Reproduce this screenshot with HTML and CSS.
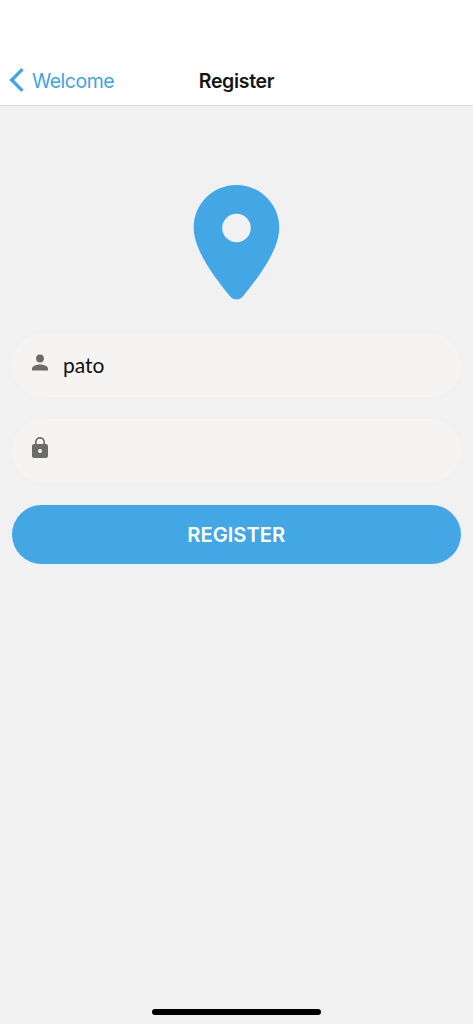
FILE: index.html
```html
<!DOCTYPE html>
<html lang="en">
<head>
<meta charset="utf-8">
<title>Register</title>
<link rel="stylesheet" href="styles.css">
</head>
<body>
<div class="screen">
  <header class="navbar">
    <a class="back">
      <svg class="chevron" width="16" height="26" viewBox="0 0 16 26"><path d="M14.500 2.200 3.700 13l10.800 10.800" fill="none" stroke="#40a5e0" stroke-width="3.300"/></svg>
      <span class="back-label">Welcome</span>
    </a>
    <h1 class="title">Register</h1>
  </header>
  <main class="content">
    <svg class="pin" width="87" height="115" viewBox="-.5 0 87 115"><path fill="#43a6e5" fill-rule="evenodd" d="M43 0C19.300 0 .2 19 .2 42.500.2 65 20.500 91.500 36.700 111.500 40 115.500 46 115.500 49.300 111.500 65.500 91.500 85.800 65 85.800 42.500 85.800 19 66.700 0 43 0ZM43 28.700a14.300 14.300 0 1 1 0 28.600 14.300 14.300 0 0 1 0-28.600Z"/></svg>
    <form class="form">
      <div class="field">
        <svg class="icon" width="24" height="24" viewBox="0 -.5 24 24"><circle cx="12" cy="8" r="3.900"/><path d="M4 20v-1.900c0-2.700 5.300-4.100 8-4.100s8 1.400 8 4.100V20Z"/></svg>
        <span class="value">pato</span>
      </div>
      <div class="field">
        <svg class="icon" width="24" height="24" viewBox="0 -1 24 24"><path fill-rule="evenodd" d="M18 8h-1V6A5 5 0 0 0 7 6v2H6a2 2 0 0 0-2 2v10c0 1.100.9 2 2 2h12a2 2 0 0 0 2-2V10a2 2 0 0 0-2-2ZM12 17a2 2 0 1 1 0-4 2 2 0 0 1 0 4ZM15.300 8H8.700V6a3.300 3.300 0 0 1 6.600 0Z"/></svg>
      </div>
      <button class="submit" type="button">REGISTER</button>
    </form>
  </main>
  <footer class="home"><div class="home-bar"></div></footer>
</div>
</body>
</html>
```
FILE: styles.css
```css
* { box-sizing: border-box; }
body { margin: 0; font-family: Inter, "Liberation Sans", sans-serif; }
.screen {
  display: flex;
  flex-direction: column;
  height: 1024px;
  background: #f1f1f1;
}
.navbar {
  display: grid;
  grid-template-columns: 1fr auto 1fr;
  align-items: center;
  height: 106px;
  padding: 55px 8px 0;
  background: #fff;
  border-bottom: 1px solid #dedede;
}
.back { display: flex; align-items: center; gap: 8px; color: #40a5e0; }
.back-label { padding-top: 1px; font-size: 19.5px; line-height: 24px; letter-spacing: -0.5px; }
.title { margin: 0; padding-top: 1px; font-size: 19.5px; line-height: 24px; font-weight: 600; color: #151515; letter-spacing: -0.3px; }
.content { flex: 1; display: flex; flex-direction: column; align-items: center; padding: 79px 12px 0 11px; }
.pin { display: block; }
.form { width: 100%; margin-top: 34px; padding-left: 0.5px; display: flex; flex-direction: column; }
.field {
  display: flex;
  align-items: flex-start;
  gap: 11px;
  height: 62.5px;
  margin-bottom: 22.5px;
  padding: 16px 16.5px;
  border-radius: 31px;
  background: #f5f4f2;
}
.icon { fill: #6b6b69; }
.value { font-family: Lato, "Noto Sans", sans-serif; font-size: 21px; line-height: 29px; color: #111; }
.submit {
  height: 59px;
  margin-top: 1px;
  border: 0;
  border-radius: 30px;
  background: #43a6e5;
  color: #fff;
  font: 600 20.2px/24px Inter, "Liberation Sans", sans-serif;
}
.home { display: flex; justify-content: center; padding-bottom: 9px; }
.home-bar { width: 169px; height: 6px; border-radius: 3px; background: #000; }
```
